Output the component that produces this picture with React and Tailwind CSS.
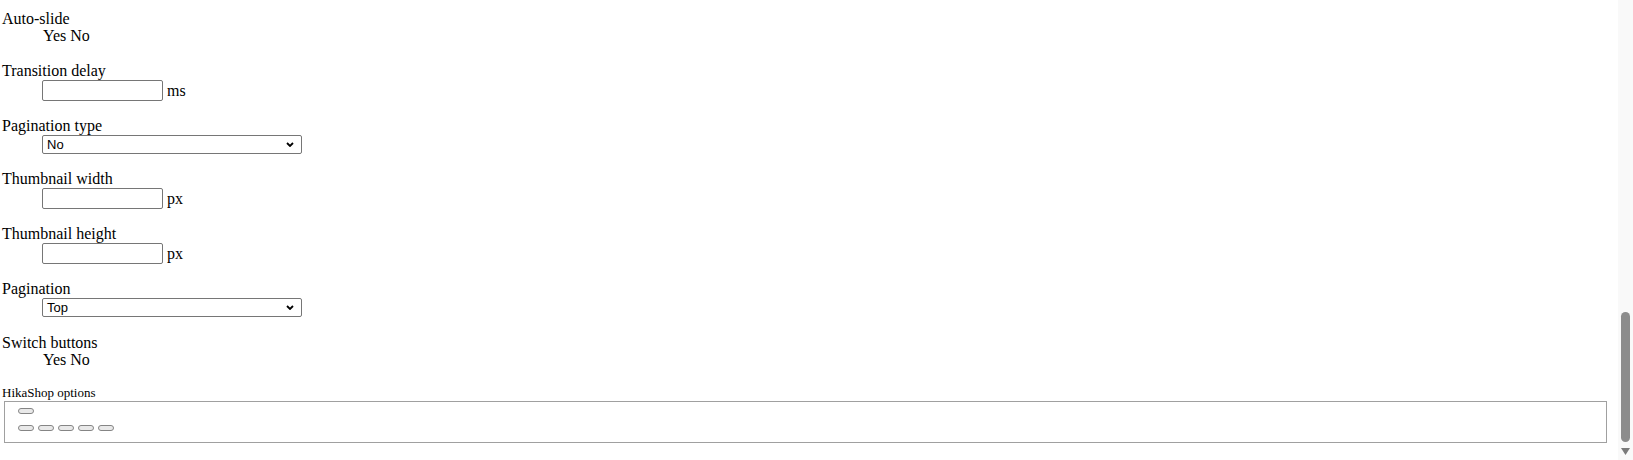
import React from 'react';

function TextBox({ unit }) {
  return (
    <div className="flex items-center h-[21px] mt-[1px] pl-[42px]">
      <div className="w-[121px] h-[21px] border border-[#767676] rounded-[2px] bg-white" />
      <span className="ml-[4px] leading-[17px]">{unit}</span>
    </div>
  );
}

function FakeSelect({ value }) {
  return (
    <div className="pl-[42px] mt-[1px]">
      <div className="w-[260px] h-[19px] border border-[#767676] rounded-[2px] bg-white flex items-center justify-between pl-[4px] pr-[7px] font-['Liberation_Sans',Arial,sans-serif] text-[13px] leading-[15px]">
        <span>{value}</span>
        <svg width="8" height="5" viewBox="0 0 8 5" className="block">
          <path d="M1 1 L4 4 L7 1" fill="none" stroke="#000" strokeWidth="1.8" />
        </svg>
      </div>
    </div>
  );
}

function Label({ children, className = '' }) {
  return <div className={`h-[17px] leading-[17px] ${className}`}>{children}</div>;
}

function Pill() {
  return <div className="w-[16px] h-[6px] rounded-[3px] border border-[#858585] bg-[#e9e9e9]" />;
}

export default function App() {
  return (
    <div className="h-[460px] overflow-hidden flex bg-white text-black font-['Liberation_Serif','Times_New_Roman',serif] text-[16px]">
      <div className="flex-1 pt-[10px]">
        {/* Auto-slide */}
        <Label className="pl-[2px]">Auto-slide</Label>
        <Label className="pl-[43px]">Yes No</Label>

        {/* Transition delay */}
        <Label className="mt-[18px] pl-[2px]">Transition delay</Label>
        <TextBox unit="ms" />

        {/* Pagination type */}
        <Label className="mt-[16px] pl-[2px]">Pagination type</Label>
        <FakeSelect value="No" />

        {/* Thumbnail width */}
        <Label className="mt-[16px] pl-[2px]">Thumbnail width</Label>
        <TextBox unit="px" />

        {/* Thumbnail height */}
        <Label className="mt-[16px] pl-[2px]">Thumbnail height</Label>
        <TextBox unit="px" />

        {/* Pagination */}
        <Label className="mt-[16px] pl-[2px]">Pagination</Label>
        <FakeSelect value="Top" />

        {/* Switch buttons */}
        <Label className="mt-[17px] pl-[2px]">Switch buttons</Label>
        <Label className="pl-[43px]">Yes No</Label>

        {/* HikaShop options */}
        <div className="mt-[17px] h-[15px] leading-[15px] text-[13px] pl-[2px]">HikaShop options</div>
        <div className="mt-[1px] ml-[4px] mr-[11px] h-[42px] border border-[#a0a0a0] pt-[6px] pl-[13px]">
          <div className="flex">
            <Pill />
          </div>
          <div className="flex gap-[4px] mt-[11px]">
            <Pill />
            <Pill />
            <Pill />
            <Pill />
            <Pill />
          </div>
        </div>
      </div>

      {/* scrollbar */}
      <div className="w-[15px] bg-[#f9f9f9] flex flex-col items-center">
        <div className="mt-[312px] w-[9px] h-[130px] rounded-full bg-[#8c8c8c]" />
        <svg width="9" height="7" viewBox="0 0 9 7" className="mt-[6px] block">
          <path d="M0 0 H9 L4.5 7 Z" fill="#7a7a7a" />
        </svg>
      </div>
    </div>
  );
}
